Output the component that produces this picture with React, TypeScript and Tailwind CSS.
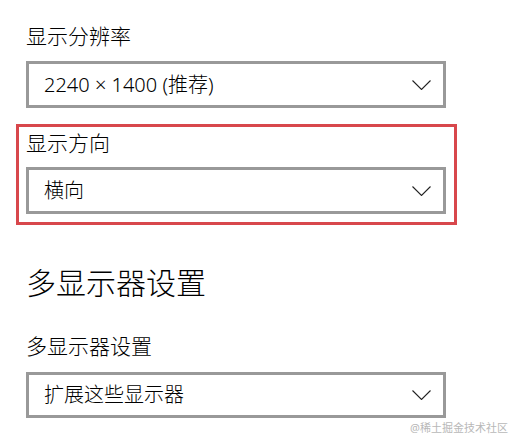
import React from "react";

const font = { fontFamily: '"Noto Sans", "Noto Sans CJK SC", sans-serif' };

function Chevron() {
  return (
    <svg width="19" height="10" viewBox="0 0 19 10" fill="none" className="shrink-0">
      <path d="M0.5 0.5 L9.5 9.5 L18.5 0.5" stroke="#222" strokeWidth="1.1" />
    </svg>
  );
}

function Dropdown({ value, h = "h-[47px]" }: { value: string; h?: string }) {
  return (
    <div
      className={`box-border flex ${h} w-[420px] items-center justify-between border-[3px] border-[#999999] bg-white pl-[15px] pr-[12px]`}
    >
      <span className="text-[20px] font-light leading-none text-black">{value}</span>
      <Chevron />
    </div>
  );
}

export default function App() {
  return (
    <div className="relative h-[437px] w-[509px] overflow-hidden bg-white" style={font}>
      <div className="flex flex-col pl-[26px] pt-[26px]">
        <div className="h-[21px] text-[21px] font-light leading-[21px] text-black">显示分辨率</div>
        <div className="mt-[14px]">
          <Dropdown value="2240 × 1400 (推荐)" />
        </div>

        <div className="relative mt-[25px]">
          <div className="h-[21px] text-[21px] font-light leading-[21px] text-black">显示方向</div>
          <div className="mt-[13px]">
            <Dropdown value="横向" />
          </div>
          <div className="pointer-events-none absolute left-[-10px] top-[-9px] h-[101px] w-[441px] border-[3px] border-[#d8474c]" />
        </div>

        <div className="mt-[54px] h-[30px] text-[30px] font-light leading-[30px] text-black">多显示器设置</div>
        <div className="mt-[38px] h-[21px] text-[21px] font-light leading-[21px] text-black">多显示器设置</div>
        <div className="mt-[15px]">
          <Dropdown value="扩展这些显示器" h="h-[46px]" />
        </div>
      </div>
      <div className="absolute right-[1px] top-[421px] text-[11px] leading-[14px] text-[#b8b8b8]">
        @稀土掘金技术社区
      </div>
    </div>
  );
}
